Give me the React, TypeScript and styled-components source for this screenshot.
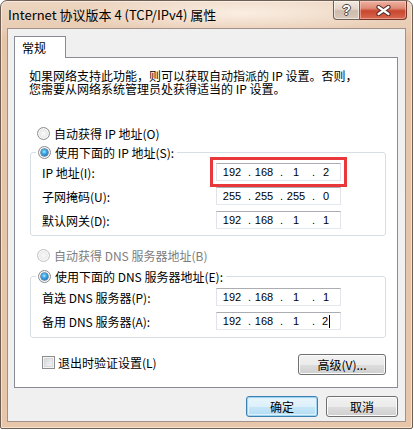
import React from "react";
import styled, { createGlobalStyle, css } from "styled-components";

const GlobalStyle = createGlobalStyle`
  html, body {
    margin: 0;
    padding: 0;
    background: #ffffff;
  }
  body {
    font-family: "Noto Sans CJK SC", "Liberation Sans", sans-serif;
    font-size: 12px;
    color: #000;
  }
  * {
    box-sizing: border-box;
  }
`;

const Window = styled.div`
  width: 413px;
  height: 429px;
  border: 1px solid #6f5f52;
  border-radius: 7px 7px 2px 2px;
  background:
    radial-gradient(ellipse 170px 20px at 240px 12px, rgba(255, 248, 240, 0.75), rgba(255, 248, 240, 0)),
    linear-gradient(180deg, #ecd5c1 0px, #e9cdb5 27px, #e6c4a7 40px, #e8c6a9 100%);
  box-shadow: inset 0 0 0 1px rgba(255, 255, 255, 0.5);
  display: flex;
  flex-direction: column;
  padding: 0 6px 6px 6px;
`;

const TitleBar = styled.div`
  height: 27px;
  display: flex;
  align-items: flex-start;
  justify-content: space-between;
`;

const Title = styled.div`
  align-self: center;
  margin-left: 1px;
  font-size: 13px;
  color: #000;
  white-space: nowrap;
`;

const CaptionGroup = styled.div`
  display: flex;
  margin-right: -1px;
`;

const CaptionButton = styled.div<{ $close?: boolean }>`
  height: 19px;
  width: ${(p) => (p.$close ? 47 : 27)}px;
  display: flex;
  align-items: center;
  justify-content: center;
  border: 1px solid #6e5f55;
  border-top: none;
  border-radius: 0 0 0 4px;
  background: linear-gradient(180deg, #f3e9e0 0%, #e3d4c7 45%, #cdbbab 55%, #d9c8b8 100%);
  box-shadow: inset 0 0 0 1px rgba(255, 255, 255, 0.55);
  ${(p) =>
    p.$close &&
    css`
      border-color: #76352a;
      border-left: none;
      border-radius: 0 0 4px 0;
      background: linear-gradient(180deg, #eeb2a3 0%, #de8b76 40%, #c8462f 55%, #d8694f 100%);
      box-shadow: inset 0 0 0 1px rgba(255, 220, 210, 0.45);
    `}
`;

const HelpGlyph = styled.span`
  font-family: "Liberation Sans", Arial, sans-serif;
  font-weight: bold;
  font-size: 14px;
  line-height: 14px;
  color: #fff;
  text-shadow: 1px 0 #4b4440, -1px 0 #4b4440, 0 1px #4b4440, 0 -1px #4b4440;
`;

const Client = styled.div`
  flex: 1;
  background: #f0f0f0;
  border: 1px solid #a1918a;
  padding: 7px 7px 4px 6px;
  display: flex;
  flex-direction: column;
`;

const Tab = styled.div`
  position: relative;
  z-index: 1;
  width: 52px;
  height: 22px;
  margin-bottom: -1px;
  padding-left: 7px;
  display: flex;
  align-items: center;
  background: #fff;
  border: 1px solid #898c95;
  border-bottom: none;
`;

const Panel = styled.div`
  flex: 1;
  width: 384px;
  background: #fff;
  border: 1px solid #898c95;
  padding: 11px 11px 0 14px;
  display: flex;
  flex-direction: column;
`;

const Intro = styled.div`
  display: flex;
  flex-direction: column;
`;

const IntroLine = styled.span`
  display: block;
  height: 13px;
  line-height: 13px;
  white-space: nowrap;
`;

const OptionRow = styled.div<{ $top: number; $disabled?: boolean }>`
  height: 16px;
  margin-top: ${(p) => p.$top}px;
  margin-left: 8px;
  display: flex;
  align-items: center;
  gap: 4px;
  white-space: nowrap;
  color: ${(p) => (p.$disabled ? "#7d7d7d" : "#000")};
`;

const Radio = styled.span<{ $checked?: boolean; $disabled?: boolean }>`
  position: relative;
  flex: none;
  width: 13px;
  height: 13px;
  border-radius: 50%;
  border: 1px solid ${(p) => (p.$disabled ? "#c2c2c2" : "#8c8e90")};
  background: ${(p) =>
    p.$disabled
      ? "radial-gradient(circle, #f7f7f7 0%, #ececec 55%, #e0e0e0 100%)"
      : "radial-gradient(circle, #fbfbfb 0%, #ececec 45%, #cfd0d2 100%)"};
  box-shadow: inset 0 0 0 1px #fafafa;
  ${(p) =>
    p.$checked &&
    css`
      &::after {
        content: "";
        position: absolute;
        left: 2px;
        top: 2px;
        width: 7px;
        height: 7px;
        border-radius: 50%;
        background: radial-gradient(circle at 45% 40%, #a9ecff 0%, #3aa5e6 40%, #0d5597 100%);
        box-shadow: 0 0 0 0.5px #1b4f7c;
      }
    `}
`;

const Group = styled.fieldset<{ $top: number; $padTop: number; $padBottom: number }>`
  margin: ${(p) => p.$top}px 0 0 1px;
  padding: ${(p) => p.$padTop}px 0 ${(p) => p.$padBottom}px 5px;
  border: 1px solid #d5dfe5;
  border-radius: 3px;
  min-width: 0;
`;

const Legend = styled.legend`
  padding: 0 3px 0 2px;
  height: 16px;
  display: flex;
  align-items: center;
  gap: 4px;
  white-space: nowrap;
`;

const FieldGrid = styled.div`
  margin-left: 6px;
  display: grid;
  grid-template-columns: 174px 125px;
  grid-auto-rows: 18px;
  row-gap: 6px;
  align-items: center;
`;

const FieldLabel = styled.span`
  white-space: nowrap;
`;

const IpField = styled.div<{ $marked?: boolean }>`
  width: 125px;
  height: 18px;
  background: #fff;
  border: 1px solid #e2e3ea;
  border-top-color: #abadb3;
  border-bottom-color: #e3e9ef;
  padding: 1px 0 0 2px;
  display: grid;
  grid-template-columns: 26px 6px 26px 6px 26px 6px 22px;
  align-items: center;
  font-family: "Liberation Sans", Arial, sans-serif;
  font-size: 11px;
  line-height: 15px;
  ${(p) =>
    p.$marked &&
    css`
      outline: 3px solid #e8383b;
      outline-offset: 3px;
    `}
`;

const Octet = styled.span`
  text-align: center;
`;

const Dot = styled.span`
  text-align: right;
`;

const Caret = styled.span`
  display: inline-block;
  width: 1px;
  height: 13px;
  margin-left: 1px;
  vertical-align: -3px;
  background: #000;
`;

const FooterRow = styled.div`
  margin-top: 16px;
  height: 21px;
  display: flex;
  align-items: flex-start;
  justify-content: space-between;
`;

const CheckLabel = styled.div`
  height: 16px;
  margin-left: 13px;
  display: flex;
  align-items: center;
  gap: 3px;
  white-space: nowrap;
`;

const CheckBox = styled.span`
  flex: none;
  width: 13px;
  height: 13px;
  border: 1px solid #8c8e90;
  background: linear-gradient(135deg, #c9cbcf 0%, #e6e7e9 50%, #f7f7f7 100%);
  box-shadow: inset 0 0 0 1px #f4f4f4, inset 0 0 0 2px #d8d9db;
`;

const Button = styled.button<{ $wide?: boolean; $default?: boolean }>`
  width: ${(p) => (p.$wide ? 88 : 72)}px;
  height: 21px;
  padding: 0;
  border: 1px solid #707070;
  border-radius: 3px;
  background: linear-gradient(180deg, #f2f2f2 0%, #ebebeb 50%, #dddddd 51%, #cfcfcf 100%);
  box-shadow: inset 0 0 0 1px #fcfcfc;
  font-family: "Noto Sans CJK SC", "Liberation Sans", sans-serif;
  font-size: 12px;
  line-height: 17px;
  color: #000;
  ${(p) =>
    p.$default &&
    css`
      border-color: #3c7fb1;
      background: linear-gradient(180deg, #eaf6fd 0%, #dcf0fb 50%, #c6e6f8 51%, #b4dcf3 100%);
      box-shadow: inset 0 0 0 1px #9fd5f2, inset 0 0 0 2px #dff1fb;
    `}
`;

const ButtonRow = styled.div`
  margin-top: 8px;
  display: flex;
  justify-content: flex-end;
  gap: 8px;
`;

const CloseIcon = () => (
  <svg width="15" height="11" viewBox="0 0 15 11">
    <path d="M2.5 2 L12.5 9 M12.5 2 L2.5 9" stroke="#4e2a22" strokeWidth="4.2" strokeLinecap="round" />
    <path d="M2.5 2 L12.5 9 M12.5 2 L2.5 9" stroke="#ffffff" strokeWidth="2.2" strokeLinecap="round" />
  </svg>
);

const IpBox = ({ value, marked, caret }: { value: string[]; marked?: boolean; caret?: boolean }) => (
  <IpField $marked={marked}>
    <Octet>{value[0]}</Octet>
    <Dot>.</Dot>
    <Octet>{value[1]}</Octet>
    <Dot>.</Dot>
    <Octet>{value[2]}</Octet>
    <Dot>.</Dot>
    <Octet>
      {value[3]}
      {caret && <Caret />}
    </Octet>
  </IpField>
);

export default function App() {
  return (
    <>
      <GlobalStyle />
      <Window>
        <TitleBar>
          <Title>Internet 协议版本 4 (TCP/IPv4) 属性</Title>
          <CaptionGroup>
            <CaptionButton>
              <HelpGlyph>?</HelpGlyph>
            </CaptionButton>
            <CaptionButton $close>
              <CloseIcon />
            </CaptionButton>
          </CaptionGroup>
        </TitleBar>
        <Client>
          <Tab>常规</Tab>
          <Panel>
            <Intro>
              <IntroLine>如果网络支持此功能，则可以获取自动指派的 IP 设置。否则，</IntroLine>
              <IntroLine>您需要从网络系统管理员处获得适当的 IP 设置。</IntroLine>
            </Intro>

            <OptionRow $top={30}>
              <Radio />
              自动获得 IP 地址(O)
            </OptionRow>
            <Group $top={3} $padTop={3} $padBottom={6}>
              <Legend>
                <Radio $checked />
                使用下面的 IP 地址(S):
              </Legend>
              <FieldGrid>
                <FieldLabel>IP 地址(I):</FieldLabel>
                <IpBox value={["192", "168", "1", "2"]} marked />
                <FieldLabel>子网掩码(U):</FieldLabel>
                <IpBox value={["255", "255", "255", "0"]} />
                <FieldLabel>默认网关(D):</FieldLabel>
                <IpBox value={["192", "168", "1", "1"]} />
              </FieldGrid>
            </Group>

            <OptionRow $top={11} $disabled>
              <Radio $disabled />
              自动获得 DNS 服务器地址(B)
            </OptionRow>
            <Group $top={5} $padTop={4} $padBottom={7}>
              <Legend>
                <Radio $checked />
                使用下面的 DNS 服务器地址(E):
              </Legend>
              <FieldGrid>
                <FieldLabel>首选 DNS 服务器(P):</FieldLabel>
                <IpBox value={["192", "168", "1", "1"]} />
                <FieldLabel>备用 DNS 服务器(A):</FieldLabel>
                <IpBox value={["192", "168", "1", "2"]} caret />
              </FieldGrid>
            </Group>

            <FooterRow>
              <CheckLabel>
                <CheckBox />
                退出时验证设置(L)
              </CheckLabel>
              <Button $wide>高级(V)...</Button>
            </FooterRow>
          </Panel>
          <ButtonRow>
            <Button $default>确定</Button>
            <Button>取消</Button>
          </ButtonRow>
        </Client>
      </Window>
    </>
  );
}
